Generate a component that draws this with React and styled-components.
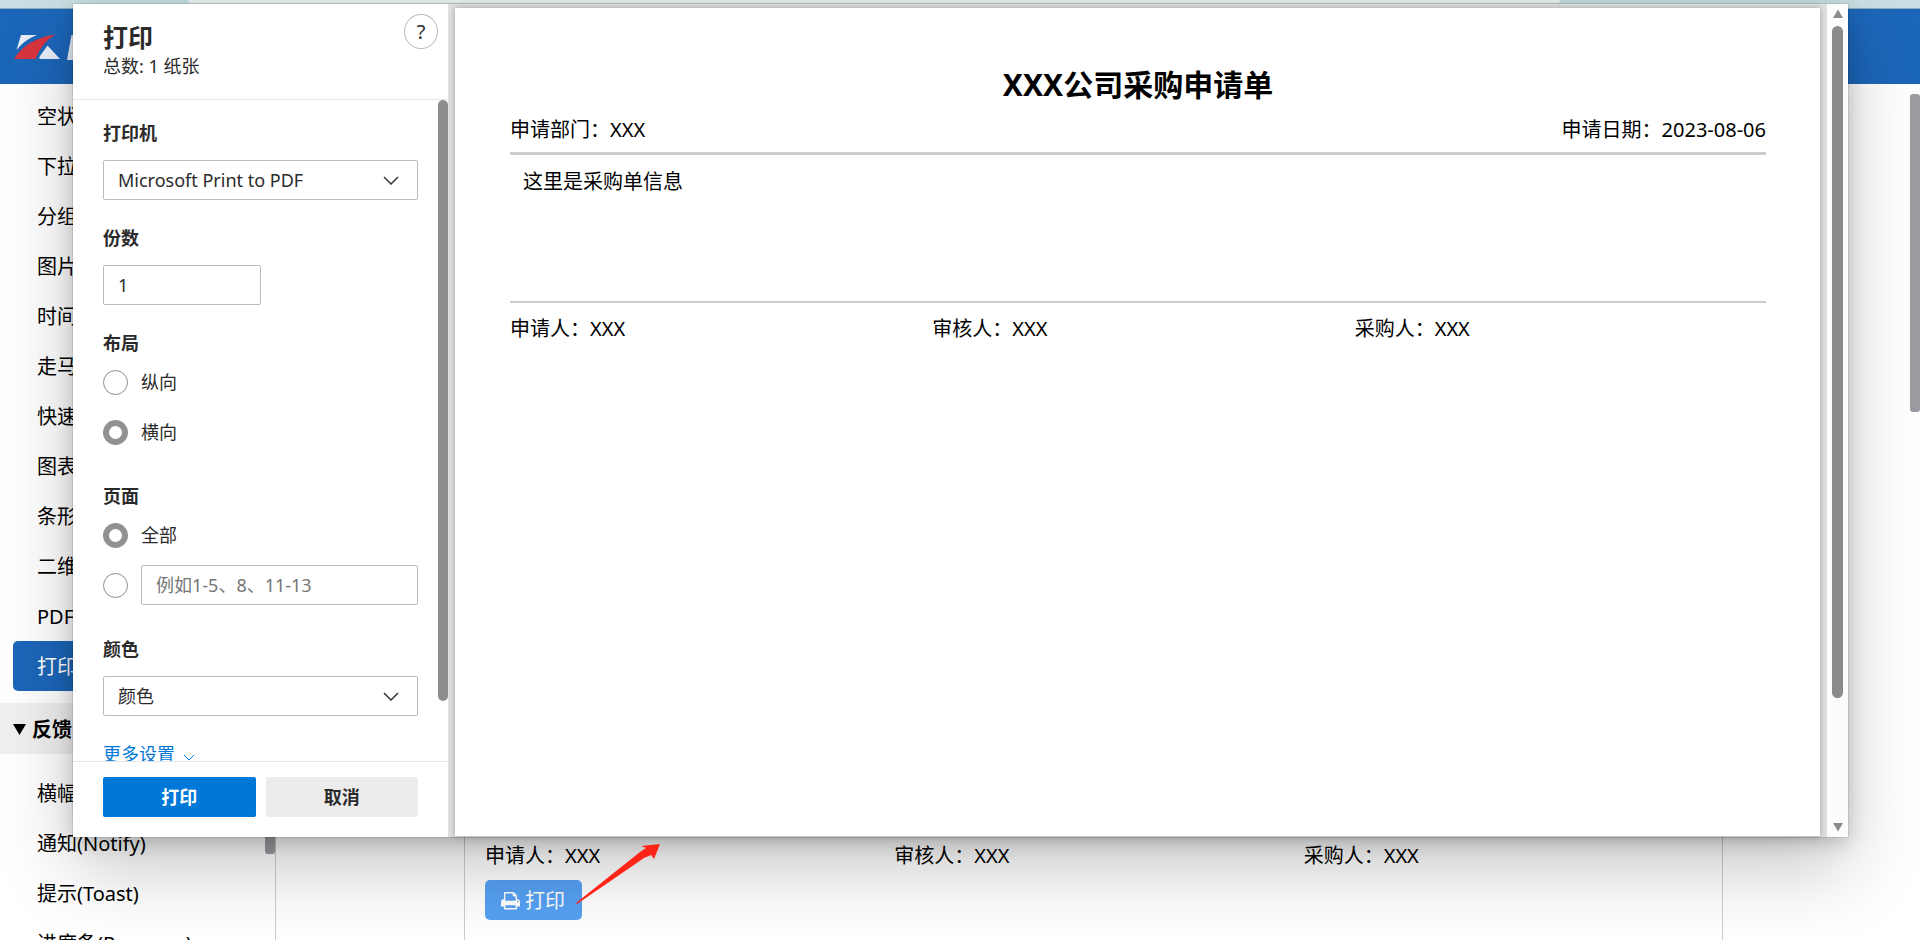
import React, { useState } from "react";
import styled, { createGlobalStyle } from "styled-components";

const menu = [
  "空状",
  "下拉",
  "分组",
  "图片",
  "时间",
  "走马",
  "快速",
  "图表",
  "条形",
  "二维",
  "PDF",
  "打印",
];
const feedback = ["横幅", "通知(Notify)", "提示(Toast)", "进度条(Progress)"];
const signers = ["申请人：XXX", "审核人：XXX", "采购人：XXX"];

const App = () => {
  return (
    <>
      <GlobalStyle />
      <Page>
        <BrowserStrip>
          <AddressBar />
        </BrowserStrip>
        <Header>
          <Logo />
        </Header>
        <Body>
          <Sidebar>
            <Nav>
              <MenuList>
                {menu.map((name) => (
                  <MenuItem key={name}>
                    <MenuLink href="#" $active={name === "打印"}>
                      {name}
                    </MenuLink>
                  </MenuItem>
                ))}
              </MenuList>
              <GroupTitle>
                <Caret viewBox="0 0 13 11">
                  <path d="M0 0h13L6.500 11z" />
                </Caret>
                反馈
              </GroupTitle>
              <MenuList $second>
                {feedback.map((name) => (
                  <MenuItem key={name}>
                    <MenuLink href="#">{name}</MenuLink>
                  </MenuItem>
                ))}
              </MenuList>
            </Nav>
            <SidebarThumb />
          </Sidebar>
          <Main>
            <Demo>
              <Signers />
              <DemoButton type="button">
                <PrinterIcon />
                打印
              </DemoButton>
            </Demo>
          </Main>
          <PageScroll>
            <PageThumb />
          </PageScroll>
        </Body>
        <PrintDialog />
        <Arrow viewBox="0 0 86 62">
          <path d="M0 60L64 9L70 5L65 3L84 1L78 16L75 12L68 15L1 61z" />
        </Arrow>
      </Page>
    </>
  );
};

export default App;

const Signers = () => (
  <SignerRow>
    {signers.map((name) => (
      <span key={name}>{name}</span>
    ))}
  </SignerRow>
);

const PrintDialog = () => {
  const [layout, setLayout] = useState("landscape");
  const [pages, setPages] = useState("all");

  return (
    <Dialog role="dialog" aria-labelledby="print-title">
      <Settings>
        <SettingsHead>
          <div>
            <DialogTitle id="print-title">打印</DialogTitle>
            <Total>总数: 1 纸张</Total>
          </div>
          <HelpButton type="button">?</HelpButton>
        </SettingsHead>
        <SettingsBody>
          <Fields>
            <Field>
              <Label htmlFor="printer">打印机</Label>
              <SelectBox>
                <Select id="printer">
                  <option>Microsoft Print to PDF</option>
                </Select>
                <Chevron />
              </SelectBox>
            </Field>
            <Field>
              <Label htmlFor="copies">份数</Label>
              <CopiesInput id="copies" type="number" defaultValue="1" min="1" />
            </Field>
            <RadioGroup>
              <Legend>布局</Legend>
              <RadioRow>
                <Radio
                  name="layout"
                  checked={layout === "portrait"}
                  onChange={() => setLayout("portrait")}
                />
                纵向
              </RadioRow>
              <RadioRow>
                <Radio
                  name="layout"
                  checked={layout === "landscape"}
                  onChange={() => setLayout("landscape")}
                />
                横向
              </RadioRow>
            </RadioGroup>
            <RadioGroup>
              <Legend>页面</Legend>
              <RadioRow>
                <Radio
                  name="pages"
                  checked={pages === "all"}
                  onChange={() => setPages("all")}
                />
                全部
              </RadioRow>
              <RadioRow as="div">
                <Radio
                  name="pages"
                  aria-label="页面"
                  checked={pages === "range"}
                  onChange={() => setPages("range")}
                />
                <TextInput
                  type="text"
                  aria-label="页面"
                  placeholder="例如1-5、8、11-13"
                />
              </RadioRow>
            </RadioGroup>
            <Field>
              <Label htmlFor="color">颜色</Label>
              <SelectBox>
                <Select id="color">
                  <option>颜色</option>
                </Select>
                <Chevron />
              </SelectBox>
            </Field>
            <MoreLink href="#">
              更多设置
              <SmallChevron viewBox="0 0 12 7">
                <path d="M1 1l5 5 5-5" />
              </SmallChevron>
            </MoreLink>
          </Fields>
          <SettingsThumb />
        </SettingsBody>
        <Actions>
          <ActionButton type="button" $primary>
            打印
          </ActionButton>
          <ActionButton type="button">取消</ActionButton>
        </Actions>
      </Settings>
      <Preview>
        <Sheet>
          <SheetTitle>XXX公司采购申请单</SheetTitle>
          <SheetMeta>
            <span>申请部门：XXX</span>
            <span>申请日期：2023-08-06</span>
          </SheetMeta>
          <SheetInfo>这里是采购单信息</SheetInfo>
          <Signers />
        </Sheet>
      </Preview>
      <PreviewScroll>
        <ScrollArrow viewBox="0 0 12 10">
          <path d="M6 0.500l5 8.500H1z" />
        </ScrollArrow>
        <PreviewThumb />
        <ScrollArrow viewBox="0 0 12 10">
          <path d="M6 9.500l5-8.500H1z" />
        </ScrollArrow>
      </PreviewScroll>
    </Dialog>
  );
};

const Logo = () => (
  <LogoSvg viewBox="0 0 66 28">
    <path fill="#e6eef8" d="M7 1h16Q10 6 2.500 16z" />
    <path fill="#d8353f" d="M0 25Q12 5 41.500 0.500Q28 8 21.500 25z" />
    <path fill="#e6eef8" d="M33.500 11.500L46 25H27Q24 25 26 22z" />
    <path fill="#e6eef8" d="M57.500 1H70v25H53z" />
  </LogoSvg>
);

const PrinterIcon = () => (
  <PrinterSvg viewBox="0 0 1664 1664">
    <path d="M384 1408h896v-256H384v256zm0-640h896V384h-160q-40 0-68-28t-28-68V128H384v640zm1152 64q0-26-19-45t-45-19-45 19-19 45 19 45 45 19 45-19 19-45zm128 0v416q0 13-9.500 22.500t-22.500 9.500h-224v160q0 40-28 68t-68 28H352q-40 0-68-28t-28-68v-160H32q-13 0-22.500-9.500T0 1248V832q0-79 56.500-135.500T192 640h64V96q0-40 28-68t68-28h672q40 0 88 20t76 48l152 152q28 28 48 76t20 88v256h64q79 0 135.500 56.500T1664 832z" />
  </PrinterSvg>
);

const Chevron = () => (
  <ChevronSvg viewBox="0 0 16 10">
    <path d="M1 2l7 7 7-7" />
  </ChevronSvg>
);

const GlobalStyle = createGlobalStyle`
  * {
    box-sizing: border-box;
  }
  body {
    margin: 0;
    overflow: hidden;
    font-family: "Noto Sans", "Noto Sans CJK SC", sans-serif;
    font-size: 20px;
    line-height: 28px;
    color: #000;
    background: #fff;
  }
  button, input, select {
    font: inherit;
    color: inherit;
  }
`;

const Page = styled.div`
  position: relative;
  display: flex;
  flex-direction: column;
  height: 100vh;
  overflow: hidden;
`;

const BrowserStrip = styled.div`
  height: 9px;
  flex: none;
  padding: 0 360px 0 188px;
  background-color: #c8e0e3;
  border-bottom: 1px solid #8fadb4;
`;

const AddressBar = styled.div`
  height: 3px;
  background-color: #eff4f5;
  border-radius: 0 0 12px 12px;
`;

const Header = styled.header`
  display: flex;
  align-items: center;
  height: 75px;
  flex: none;
  padding: 2px 0 0 14px;
  background-color: #1c66b9;
`;

const LogoSvg = styled.svg`
  width: 66px;
  height: 28px;
`;

const Body = styled.div`
  display: flex;
  flex: 1;
  min-height: 0;
`;

const Sidebar = styled.aside`
  display: flex;
  width: 276px;
  flex: none;
  border-right: 1px solid #ccc;
`;

const Nav = styled.nav`
  flex: 1;
  overflow: hidden;
`;

const SidebarThumb = styled.div`
  width: 10px;
  height: 318px;
  margin-top: 452px;
  border-radius: 3px;
  background-color: #9c9da3;
`;

const MenuList = styled.ul`
  margin: 0;
  padding: ${(props) => (props.$second ? "14px" : "7px")} 0 12px 13px;
  list-style: none;
`;

const MenuItem = styled.li`
  height: 50px;
`;

const MenuLink = styled.a`
  display: block;
  padding: 12px 24px 10px;
  border-radius: 5px;
  text-decoration: none;
  color: ${(props) => (props.$active ? "#fff" : "#000")};
  background-color: ${(props) => (props.$active ? "#1c66b9" : "transparent")};
`;

const GroupTitle = styled.div`
  display: flex;
  align-items: center;
  gap: 6px;
  height: 51px;
  padding: 2px 13px 0;
  font-weight: bold;
  background-color: #f0f0f0;
`;

const Caret = styled.svg`
  width: 13px;
  height: 11px;
`;

const Main = styled.main`
  display: flex;
  flex: 1;
  padding: 0 187px 0 188px;
`;

const Demo = styled.section`
  display: flex;
  flex-direction: column;
  align-items: flex-start;
  justify-content: flex-end;
  gap: 10px;
  flex: 1;
  padding: 20px;
  border: solid #ccc;
  border-width: 0 1px;
`;

const SignerRow = styled.div`
  display: grid;
  grid-template-columns: repeat(3, 1fr);
  gap: 11px;
  width: 100%;
`;

const DemoButton = styled.button`
  display: flex;
  align-items: center;
  gap: 5px;
  height: 40px;
  padding: 2px 17px 0 16px;
  border: none;
  border-radius: 5px;
  background-color: #56a1f3;
  color: #fff;
`;

const PrinterSvg = styled.svg`
  width: 19px;
  height: 19px;
  fill: #fff;
`;

const PageScroll = styled.div`
  width: 10px;
  padding-top: 10px;
`;

const PageThumb = styled.div`
  height: 318px;
  border-radius: 3px;
  background-color: #9c9da3;
`;

const Arrow = styled.svg`
  position: absolute;
  left: 576px;
  top: 843px;
  width: 86px;
  height: 62px;
  fill: #ff2418;
`;

const Dialog = styled.div`
  position: absolute;
  top: 4px;
  right: 72px;
  bottom: 103px;
  left: 73px;
  display: flex;
  background-color: #fff;
  box-shadow: 0 32px 72px rgba(0, 0, 0, 0.22), 0 6px 18px rgba(0, 0, 0, 0.18),
    0 0 1px rgba(0, 0, 0, 0.5);
`;

const Settings = styled.div`
  display: flex;
  flex-direction: column;
  width: 375px;
  flex: none;
  font-size: 18px;
  line-height: 24px;
  color: #2b2b2b;
`;

const SettingsHead = styled.div`
  display: flex;
  justify-content: space-between;
  height: 96px;
  flex: none;
  padding: 10px 10px 0 30px;
  border-bottom: 1px solid #e5e5e5;
`;

const DialogTitle = styled.h1`
  margin: 6px 0 0;
  font-size: 25px;
  line-height: 34px;
`;

const Total = styled.div`
  line-height: 24px;
`;

const HelpButton = styled.button`
  width: 34px;
  height: 35px;
  padding: 0;
  border: 1px solid #bbb;
  border-radius: 50%;
  background-color: #fff;
  font-size: 20px;
`;

const SettingsBody = styled.div`
  display: flex;
  flex: 1;
  min-height: 0;
  overflow: hidden;
`;

const Fields = styled.div`
  display: flex;
  flex-direction: column;
  gap: 26px;
  flex: 1;
  padding: 21px 20px 0 30px;
`;

const SettingsThumb = styled.div`
  width: 10px;
  height: 601px;
  border-radius: 5px;
  background-color: #8d8d8d;
`;

const Field = styled.div`
  display: flex;
  flex-direction: column;
  gap: 15px;
`;

const Label = styled.label`
  font-weight: bold;
`;

const SelectBox = styled.div`
  display: grid;
  align-items: center;
  > * {
    grid-area: 1 / 1;
  }
`;

const Select = styled.select`
  width: 100%;
  height: 40px;
  padding: 0 14px;
  border: 1px solid #bbb;
  border-radius: 2px;
  background-color: #fff;
  appearance: none;
`;

const ChevronSvg = styled.svg`
  justify-self: end;
  width: 16px;
  height: 10px;
  margin-right: 19px;
  fill: none;
  stroke: #333;
  stroke-width: 1.5;
  pointer-events: none;
`;

const TextInput = styled.input`
  width: 100%;
  height: 40px;
  min-width: 0;
  padding: 0 14px;
  border: 1px solid #bbb;
  border-radius: 2px;
  background-color: #fff;
  appearance: textfield;
  &::placeholder {
    color: #767676;
  }
  &::-webkit-inner-spin-button {
    display: none;
  }
`;

const CopiesInput = styled(TextInput)`
  width: 158px;
`;

const RadioGroup = styled.fieldset`
  display: flex;
  flex-direction: column;
  gap: 10px;
  margin: 0;
  padding: 0 0 6px;
  border: none;
`;

const Legend = styled.legend`
  padding: 0 0 7px;
  font-weight: bold;
`;

const RadioRow = styled.label`
  display: flex;
  align-items: center;
  gap: 13px;
  height: 40px;
`;

const Radio = styled.input.attrs({ type: "radio" })`
  width: 25px;
  height: 25px;
  flex: none;
  margin: 0;
  border: 1px solid #8d8d8d;
  border-radius: 50%;
  appearance: none;
  &:checked {
    border: 6px solid #919191;
  }
`;

const MoreLink = styled.a`
  display: flex;
  align-items: center;
  gap: 8px;
  text-decoration: none;
  color: #0078d7;
`;

const SmallChevron = styled.svg`
  width: 12px;
  height: 7px;
  margin-top: 6px;
  fill: none;
  stroke: #0078d7;
`;

const Actions = styled.div`
  display: grid;
  grid-template-columns: 1fr 1fr;
  gap: 10px;
  flex: none;
  padding: 15px 30px 20px;
  border-top: 1px solid #e5e5e5;
`;

const ActionButton = styled.button`
  height: 40px;
  border: none;
  border-radius: 2px;
  font-weight: bold;
  color: ${(props) => (props.$primary ? "#fff" : "#2b2b2b")};
  background-color: ${(props) => (props.$primary ? "#0078d7" : "#ececec")};
`;

const Preview = styled.div`
  display: flex;
  flex: 1;
  padding: 4px 7px 1px;
  background-color: #e0e0e0;
`;

const Sheet = styled.article`
  flex: 1;
  padding: 57px 54px 0 55px;
  background-color: #fff;
  box-shadow: 0 0 6px rgba(0, 0, 0, 0.3);
`;

const SheetTitle = styled.h2`
  margin: 0 0 11px;
  font-size: 30px;
  line-height: 40px;
  text-align: center;
`;

const SheetMeta = styled.div`
  display: flex;
  justify-content: space-between;
  padding-bottom: 8px;
  border-bottom: 3px solid #ccc;
`;

const SheetInfo = styled.div`
  height: 148px;
  margin-bottom: 12px;
  padding: 13px;
  border-bottom: 2px solid #ccc;
`;

const PreviewScroll = styled.div`
  display: flex;
  flex-direction: column;
  align-items: center;
  width: 21px;
  flex: none;
  padding: 5px 0;
  background-color: #fcfcfc;
`;

const ScrollArrow = styled.svg`
  width: 12px;
  height: 10px;
  flex: none;
  fill: #8b8b8b;
`;

const PreviewThumb = styled.div`
  width: 11px;
  height: 672px;
  margin: 7px 0 auto;
  border-radius: 6px;
  background-color: #8b8b8b;
`;
